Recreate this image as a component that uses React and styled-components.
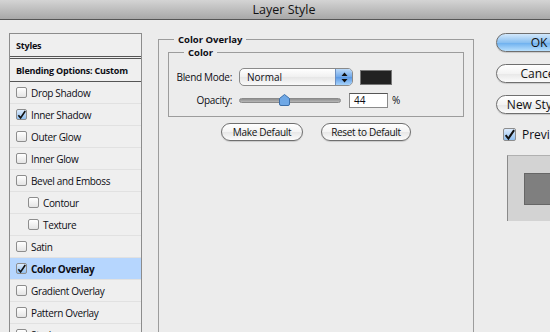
import React from "react";
import styled, { createGlobalStyle, css } from "styled-components";

const GlobalStyle = createGlobalStyle`
  html, body { margin: 0; padding: 0; background: #ececec; overflow: hidden; }
  body { width: 550px; height: 332px; font-family: "Open Sans", "DejaVu Sans", sans-serif; color: #0d0d14; }
  * { box-sizing: border-box; }
`;

const Window = styled.div`
  width: 550px;
  height: 332px;
  display: flex;
  flex-direction: column;
  overflow: hidden;
`;

const TitleBar = styled.div`
  height: 20px;
  flex-shrink: 0;
  border-bottom: 1px solid #555;
  background: linear-gradient(#d4d4d4, #a8a8a8);
  display: flex;
  align-items: center;
  justify-content: center;
  padding-left: 18px;
  font-size: 12.5px;
  font-weight: 500;
  color: #111;
`;

const Main = styled.div`
  flex: 1;
  min-height: 0;
  display: flex;
  align-items: flex-start;
  padding: 13px 0 0 9px;
`;

const StylesPanel = styled.div`
  width: 133px;
  height: 320px;
  flex-shrink: 0;
  border: 1px solid #8c8c8c;
  border-bottom: none;
  background: #efefef;
  display: flex;
  flex-direction: column;
`;

const HeaderRow = styled.div`
  height: ${(p) => p.$h}px;
  flex-shrink: 0;
  display: flex;
  align-items: center;
  padding-left: 6px;
  font-size: 9px;
  font-weight: bold;
  letter-spacing: -0.2px;
  white-space: nowrap;
  border-bottom: ${(p) => p.$border};
`;

const ItemRow = styled.div`
  height: 22px;
  flex-shrink: 0;
  display: flex;
  align-items: center;
  gap: 4px;
  padding-left: ${(p) => (p.$indent ? 18 : 6)}px;
  border-bottom: 1px solid #e1e1e1;
  font-size: 10px;
  letter-spacing: -0.35px;
  white-space: nowrap;
  font-weight: ${(p) => (p.$active ? 700 : 500)};
  background: ${(p) => (p.$active ? "#b6d6fe" : "transparent")};
`;

const Box = styled.span`
  width: ${(p) => (p.$large ? 13 : 11)}px;
  height: ${(p) => (p.$large ? 13 : 11)}px;
  flex-shrink: 0;
  border: 1px solid #8d8d8d;
  border-radius: 2px;
  display: inline-flex;
  align-items: center;
  justify-content: center;
  background: ${(p) =>
    p.$checked ? "linear-gradient(#dcebfd, #8fbff0)" : "linear-gradient(#ffffff, #e4e4e4)"};
`;

const Check = ({ checked, large }) => (
  <Box $checked={checked} $large={large}>
    {checked && (
      <svg width={large ? 12 : 10} height={large ? 12 : 10} viewBox="0 0 10 10">
        <path d="M1.5 5.2 L4 8.2 L9.2 0.6" fill="none" stroke="#111" strokeWidth="1.8" />
      </svg>
    )}
  </Box>
);

const Fieldset = styled.fieldset`
  margin: 0;
  padding: ${(p) => p.$pad};
  border: 1px solid #9c9c9c;
  min-width: 0;
  ${(p) =>
    p.$outer &&
    css`
      width: 316px;
      height: 320px;
      flex-shrink: 0;
      margin-left: 16px;
    `}
`;

const Legend = styled.legend`
  padding: 0 4px;
  margin-left: ${(p) => p.$ml}px;
  font-size: 9.5px;
  line-height: 13px;
  font-weight: bold;
`;

const FieldRow = styled.div`
  display: flex;
  align-items: center;
  height: 18px;
  margin-top: ${(p) => p.$mt || 0}px;
`;

const Label = styled.span`
  width: 64px;
  flex-shrink: 0;
  text-align: right;
  padding-right: 1px;
  font-size: 10px;
  font-weight: 500;
  letter-spacing: -0.3px;
  margin-right: 6px;
`;

const Select = styled.div`
  width: 114px;
  height: 18px;
  border: 1px solid #8a8a8a;
  border-radius: 5px;
  background: linear-gradient(#ffffff, #f0f0f0 50%, #e6e6e6 51%, #fafafa);
  display: flex;
  align-items: center;
  overflow: hidden;
  font-size: 10px;
  font-weight: 500;
`;

const SelectText = styled.span`
  flex: 1;
  padding-left: 7px;
`;

const Stepper = styled.span`
  width: 17px;
  height: 100%;
  border-left: 1px solid #6d8fbf;
  background: linear-gradient(#bcdaf9, #70a8ea 50%, #5a98e4 51%, #a6d2fb);
  display: flex;
  align-items: center;
  justify-content: center;
`;

const Swatch = styled.span`
  width: 32px;
  height: 15px;
  margin-left: 7px;
  background: #222;
  border: 1px solid #777;
`;

const SliderTrack = styled.div`
  position: relative;
  width: 102px;
  height: 5px;
  border-radius: 3px;
  background: linear-gradient(#8f8f8f, #b7b7b7);
  border: 1px solid #8a8a8a;
`;

const Thumb = styled.svg`
  position: absolute;
  top: -5px;
  left: 39px;
`;

const NumInput = styled.div`
  width: 39px;
  height: 15px;
  margin-left: 8px;
  border: 1px solid #8a8a8a;
  border-top-color: #555;
  background: #fff;
  font-size: 10px;
  font-weight: 500;
  padding-left: 4px;
  line-height: 13px;
`;

const Unit = styled.span`
  font-size: 10px;
  font-weight: 500;
  margin-left: 4px;
`;

const ButtonRow = styled.div`
  display: flex;
  justify-content: center;
  gap: 18px;
  margin-top: 6px;
`;

const PillButton = styled.div`
  width: ${(p) => p.$w}px;
  height: ${(p) => p.$h || 18}px;
  border: 1px solid #6f6f6f;
  border-radius: 10px;
  display: flex;
  align-items: center;
  justify-content: center;
  font-size: ${(p) => p.$fs || 10}px;
  font-weight: 500;
  letter-spacing: ${(p) => (p.$fs ? 0 : -0.3)}px;
  white-space: nowrap;
  color: #111;
  background: ${(p) =>
    p.$primary
      ? "linear-gradient(#d3e8fb, #8ac0f1 50%, #6aaeee 51%, #b9e0fd)"
      : "linear-gradient(#ffffff, #f3f3f3 50%, #e7e7e7 51%, #fbfbfb)"};
  box-shadow: 0 1px 1px rgba(0, 0, 0, 0.15);
  flex-shrink: 0;
`;

const RightColumn = styled.div`
  margin-left: 22px;
  display: flex;
  flex-direction: column;
  flex-shrink: 0;
`;

const RightButtons = styled.div`
  display: flex;
  flex-direction: column;
  gap: 12px;
`;

const PreviewRow = styled.div`
  display: flex;
  align-items: center;
  gap: 6px;
  margin: 12px 0 0 7px;
  font-size: 12px;
  font-weight: 500;
  white-space: nowrap;
`;

const PreviewBox = styled.div`
  margin: 12px 0 0 11px;
  width: 80px;
  height: 66px;
  background: #d3d3d3;
  border-left: 1px solid #8a8a8a;
  border-top: 1px solid #b0b0b0;
  padding: 17px 0 0 16px;
`;

const PreviewInner = styled.div`
  width: 60px;
  height: 32px;
  background: #7f7f7f;
  border: 1px solid #666;
`;

const items = [
  { label: "Drop Shadow" },
  { label: "Inner Shadow", checked: true },
  { label: "Outer Glow" },
  { label: "Inner Glow" },
  { label: "Bevel and Emboss" },
  { label: "Contour", indent: true },
  { label: "Texture", indent: true },
  { label: "Satin" },
  { label: "Color Overlay", checked: true, active: true },
  { label: "Gradient Overlay" },
  { label: "Pattern Overlay" },
  { label: "Stroke" },
];

export default function App() {
  return (
    <>
      <GlobalStyle />
      <Window>
        <TitleBar>Layer Style</TitleBar>
        <Main>
          <StylesPanel>
            <HeaderRow $h={25} $border="3px double #555">Styles</HeaderRow>
            <HeaderRow $h={23} $border="1px solid #555">Blending Options: Custom</HeaderRow>
            {items.map((it) => (
              <ItemRow key={it.label} $indent={it.indent} $active={it.active}>
                <Check checked={it.checked} />
                {it.label}
              </ItemRow>
            ))}
          </StylesPanel>

          <Fieldset $outer $pad="0 9px">
            <Legend $ml={6}>Color Overlay</Legend>
            <Fieldset $pad="9px 8px 7px 0">
              <Legend $ml={15}>Color</Legend>
              <FieldRow>
                <Label>Blend Mode:</Label>
                <Select>
                  <SelectText>Normal</SelectText>
                  <Stepper>
                    <svg width="7" height="11" viewBox="0 0 7 11">
                      <path d="M3.5 0.5 L6.5 4 L0.5 4 Z M3.5 10.5 L6.5 7 L0.5 7 Z" fill="#111" />
                    </svg>
                  </Stepper>
                </Select>
                <Swatch />
              </FieldRow>
              <FieldRow $mt={5}>
                <Label>Opacity:</Label>
                <SliderTrack>
                  <Thumb width="11" height="12" viewBox="0 0 11 12">
                    <path
                      d="M5.5 0.5 L10.5 4.5 L10.5 10 Q10.5 11.5 9 11.5 L2 11.5 Q0.5 11.5 0.5 10 L0.5 4.5 Z"
                      fill="#6fa8e6"
                      stroke="#3c6ea8"
                    />
                  </Thumb>
                </SliderTrack>
                <NumInput>44</NumInput>
                <Unit>%</Unit>
              </FieldRow>
            </Fieldset>
            <ButtonRow>
              <PillButton $w={82}>Make Default</PillButton>
              <PillButton $w={90}>Reset to Default</PillButton>
            </ButtonRow>
          </Fieldset>

          <RightColumn>
            <RightButtons>
              <PillButton $w={86} $h={19} $fs={12} $primary>
                OK
              </PillButton>
              <PillButton $w={86} $h={19} $fs={12}>
                Cancel
              </PillButton>
              <PillButton $w={86} $h={19} $fs={12}>
                New Style...
              </PillButton>
            </RightButtons>
            <PreviewRow>
              <Check checked large />
              Preview
            </PreviewRow>
            <PreviewBox>
              <PreviewInner />
            </PreviewBox>
          </RightColumn>
        </Main>
      </Window>
    </>
  );
}
